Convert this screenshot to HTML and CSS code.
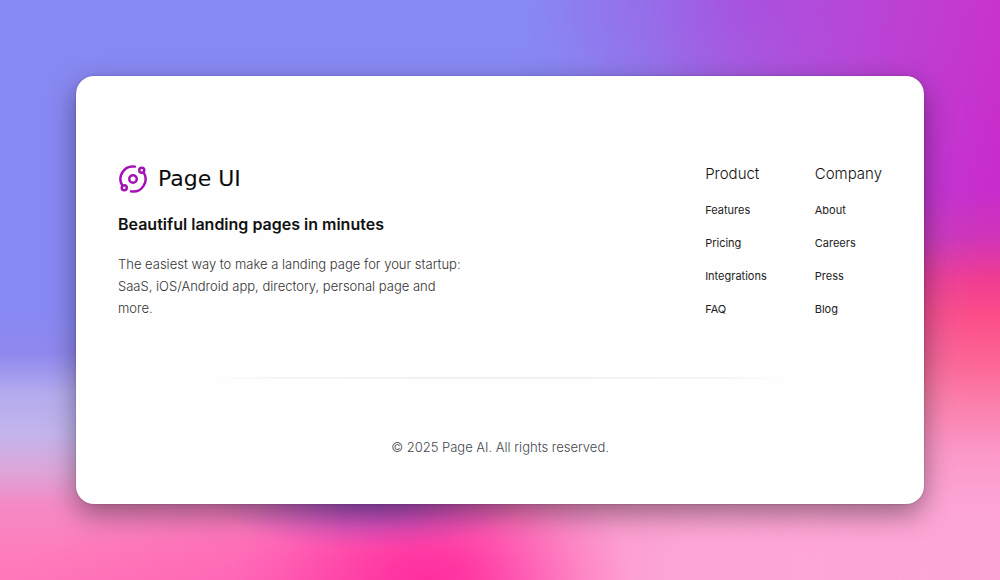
FILE: index.html
```html
<!DOCTYPE html>
<html lang="en">
<head>
<meta charset="utf-8">
<title>Page UI</title>
<link rel="stylesheet" href="styles.css">
</head>
<body>
<div class="page">
  <footer class="card">
    <div class="top">
      <section class="brand">
        <a class="logo" href="#">
          <svg class="logo-mark" viewBox="0 0 24 24" aria-hidden="true">
            <circle cx="12" cy="12" r="3"/>
            <circle cx="19" cy="5" r="2"/>
            <circle cx="5" cy="19" r="2"/>
            <path d="M10.4 21.9a10 10 0 0 0 9.941-15.416"/>
            <path d="M13.5 2.1a10 10 0 0 0-9.841 15.416"/>
          </svg>
          <span>Page UI</span>
        </a>
        <h2 class="tagline">Beautiful landing pages in minutes</h2>
        <p class="about">The easiest way to make a landing page for your startup: SaaS, iOS/Android app, directory, personal page and more.</p>
      </section>
      <nav class="columns" aria-label="Footer">
        <div class="column">
          <h3 class="heading">Product</h3>
          <a class="link" href="#">Features</a>
          <a class="link" href="#">Pricing</a>
          <a class="link" href="#">Integrations</a>
          <a class="link" href="#">FAQ</a>
        </div>
        <div class="column">
          <h3 class="heading">Company</h3>
          <a class="link" href="#">About</a>
          <a class="link" href="#">Careers</a>
          <a class="link" href="#">Press</a>
          <a class="link" href="#">Blog</a>
        </div>
      </nav>
    </div>
    <hr class="rule">
    <p class="copyright">© 2025 Page AI. All rights reserved.</p>
  </footer>
</div>
</body>
</html>
```
FILE: styles.css
```css
* {
  box-sizing: border-box;
  margin: 0;
}

body {
  font-family: Inter, "Liberation Sans", sans-serif;
  color: #111;
}

.page {
  position: relative;
  isolation: isolate;
  min-height: 100vh;
  padding: 76px;
  background:
    radial-gradient(ellipse 16% 10% at 37% 85%, #8044d0d0 0%, #8044d080 35%, #8044d030 70%, #8044d000 100%),
    radial-gradient(ellipse 20% 26% at 43% 101%, #ff2c9e 0%, #ff2c9ed0 22%, #ff2c9e80 48%, #ff2c9e30 75%, #ff2c9e00 100%),
    radial-gradient(ellipse 46% 36% at 86% 98%, #fda6d6 0%, #fda6d6 40%, #fda6d680 70%, #fda6d600 100%),
    radial-gradient(ellipse 34% 24% at 34% 106%, #ff5cb4 0%, #ff5cb480 50%, #ff5cb400 100%),
    radial-gradient(ellipse 22% 24% at 76% 0%, #9c50e8a0 0%, #9c58e860 50%, #9068e800 100%),
    linear-gradient(#8888f3 0%, #8888f3 54%, #9088ee 61%, #b4acee 68%, #c4b4ec 75%, #dca6d8 81%, #f48ac6 87%, #ff7cba 96%, #ff78ba 100%);
}

.page::before {
  content: "";
  position: absolute;
  inset: 0;
  z-index: -1;
  background: linear-gradient(#c932cc 0%, #c82ccc 33%, #d034b8 41%, #f03c92 48%, #fc4c88 54%, #fc6494 62%, #fb80ac 70%, #fb98c8 78%, #fda4d4 86%, #fda6d6 100%);
  -webkit-mask-image: linear-gradient(96deg, transparent 50%, #0002 62%, #0007 73%, #000c 85%, #000 95%);
  mask-image: linear-gradient(96deg, transparent 50%, #0002 62%, #0007 73%, #000c 85%, #000 95%);
}

.card {
  display: flex;
  flex-direction: column;
  padding: 88px 42px 47px;
  border-radius: 18px;
  background: #fefefe;
  box-shadow: 0 0 2px #0004, 0 10px 28px #0006;
}

.top {
  display: flex;
  justify-content: space-between;
  align-items: flex-start;
}

.brand {
  display: flex;
  flex-direction: column;
  max-width: 350px;
}

.logo {
  display: flex;
  align-items: center;
  gap: 10px;
  color: #0a0a0a;
  font: 22px/30px "DejaVu Sans", sans-serif;
  text-decoration: none;
}

.logo-mark {
  width: 30px;
  height: 30px;
  fill: none;
  stroke: #a212b4;
  stroke-width: 2;
  stroke-linecap: round;
  stroke-linejoin: round;
}

.tagline {
  margin-top: 18px;
  font-size: 16px;
  line-height: 24px;
  font-weight: 600;
}

.about {
  margin-top: 17px;
  color: #333;
  font-size: 13px;
  line-height: 22px;
  font-weight: 300;
}

.columns {
  display: flex;
  gap: 48px;
}

.column {
  display: flex;
  flex-direction: column;
  gap: 17px;
}

.heading {
  margin-bottom: 1px;
  font-size: 15px;
  line-height: 20px;
  font-weight: 300;
}

.link {
  color: #222;
  font-size: 11px;
  line-height: 16px;
  text-decoration: none;
}

.rule {
  width: 74%;
  height: 2px;
  margin: 58px auto 0;
  border: 0;
  background: linear-gradient(to right, #f4f4f400, #f5f5f5 10%, #f1f1f1 50%, #f5f5f5 90%, #f4f4f400);
}

.copyright {
  margin-top: 58px;
  color: #44484e;
  font-size: 13px;
  line-height: 20px;
  font-weight: 300;
  text-align: center;
}
```
